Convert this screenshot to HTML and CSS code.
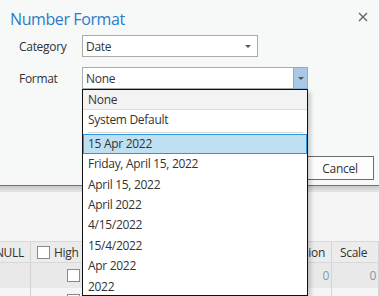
FILE: index.html
```html
<!DOCTYPE html>
<html lang="en">
<head>
  <meta charset="UTF-8" />
  <title>Number Format</title>
  <link rel="stylesheet" href="styles.css">
</head>
<body>
  <div class="dialog">
    <div class="dialog-header">
      <div class="dialog-title">Number Format</div>
      <svg class="close-icon" width="10" height="10" viewBox="0 0 10 10">
        <path d="M1 1 L9 9 M9 1 L1 9" stroke="#666" stroke-width="1.4" fill="none" />
      </svg>
    </div>

    <div class="form-row">
      <label class="form-label">Category</label>
      <div class="select select-category">
        <span class="select-value">Date</span>
        <span class="select-arrow"></span>
      </div>
    </div>

    <div class="form-row">
      <label class="form-label">Format</label>
      <div class="select select-format">
        <span class="select-value">None</span>
        <span class="select-button"><span class="select-arrow"></span></span>
      </div>
    </div>

    <div class="dialog-footer">
      <button class="btn">Cancel</button>
    </div>
  </div>
  <div class="dialog-shadow"></div>

  <div class="table-area">
    <div class="table">
      <div class="table-row table-head">
        <div class="cell cell-null"><span>Allow NULL</span></div>
        <div class="cell cell-highlight"><span class="checkbox"></span>High</div>
        <div class="cell cell-precision">Precision</div>
        <div class="cell cell-scale">Scale</div>
      </div>
      <div class="table-row row-alt">
        <div class="cell cell-null"></div>
        <div class="cell cell-check"><span class="checkbox"></span></div>
        <div class="cell cell-num">0</div>
        <div class="cell cell-num">0</div>
      </div>
      <div class="table-row">
        <div class="cell cell-null"></div>
        <div class="cell cell-check"><span class="checkbox"></span></div>
        <div class="cell cell-num">0</div>
        <div class="cell cell-num">0</div>
      </div>
    </div>
  </div>

  <ul class="dropdown-list">
    <li class="option option-none">None</li>
    <li class="option option-default">System Default</li>
    <li class="option option-selected">15 Apr 2022</li>
    <li class="option">Friday, April 15, 2022</li>
    <li class="option">April 15, 2022</li>
    <li class="option">April 2022</li>
    <li class="option">4/15/2022</li>
    <li class="option">15/4/2022</li>
    <li class="option">Apr 2022</li>
    <li class="option">2022</li>
  </ul>
</body>
</html>
```

FILE: styles.css
```css
* {
  box-sizing: border-box;
  margin: 0;
  padding: 0;
}

body {
  font-family: "Open Sans", "Noto Sans", sans-serif;
  font-size: 12px;
  letter-spacing: -0.3px;
  color: #333;
  background: #f5f5f5;
  width: 379px;
  height: 296px;
  overflow: hidden;
  position: relative;
}

/* Dialog */
.dialog {
  height: 186px;
  background: #f7f8f8;
  border-bottom: 1px solid #2f86cf;
  display: flex;
  flex-direction: column;
}

.dialog-header {
  display: flex;
  justify-content: space-between;
  align-items: center;
  padding: 7px 11px 0 10px;
  height: 30px;
}

.dialog-title {
  font-size: 16px;
  letter-spacing: -0.4px;
  color: #2a7cc7;
}

.close-icon {
  margin-top: -3px;
}

.form-row {
  display: flex;
  align-items: center;
  height: 22px;
  margin-top: 5px;
}

.form-row + .form-row {
  margin-top: 10px;
}

.form-label {
  width: 82px;
  padding-left: 19px;
}

.select {
  height: 22px;
  background: #fff;
  border: 1px solid #ababab;
  display: flex;
  align-items: center;
  justify-content: space-between;
}

.select-category {
  width: 176px;
  padding-right: 6px;
}

.select-format {
  width: 226px;
}

.select-value {
  padding-left: 3px;
}

.select-arrow {
  width: 0;
  height: 0;
  border-left: 3px solid transparent;
  border-right: 3px solid transparent;
  border-top: 3px solid #555;
}

.select-button {
  width: 15px;
  height: 22px;
  margin-right: -1px;
  background: #a9c9e6;
  border: 1px solid #7eb0da;
  display: flex;
  align-items: center;
  justify-content: center;
}

.dialog-footer {
  margin-top: auto;
  display: flex;
  justify-content: flex-end;
  padding: 0 5px 5px 0;
}

.btn {
  width: 68px;
  height: 24px;
  font-family: inherit;
  font-size: 12px;
  letter-spacing: -0.3px;
  color: #333;
  background: #fdfdfd;
  border: 1px solid #6b6b6b;
}

.dialog-shadow {
  height: 6px;
  background: linear-gradient(to bottom, #c9c9c9, #e6e6e6);
}

/* Table behind */
.table-area {
  padding-top: 49px;
  height: 104px;
  overflow: hidden;
}

.table-row {
  display: grid;
  grid-template-columns: 31px 85px 216px 47px;
  height: 25px;
}

.table-head {
  height: 22px;
  background: #ececec;
  border-top: 1px solid #d8d8d8;
  border-bottom: 1px solid #d8d8d8;
}

.row-alt {
  background: #e9e9e9;
}

.cell {
  display: flex;
  align-items: center;
  border-right: 1px solid #d4d4d4;
  white-space: nowrap;
  overflow: hidden;
}

.cell-null {
  justify-content: flex-end;
  padding-right: 6px;
}

.cell-highlight {
  padding-left: 6px;
  gap: 4px;
}

.cell-precision {
  justify-content: flex-end;
  padding-right: 6px;
}

.cell-scale {
  padding-left: 8px;
}

.cell-check {
  justify-content: center;
}

.cell-num {
  justify-content: flex-end;
  padding-right: 2px;
  color: #7f9ab5;
}

.checkbox {
  width: 13px;
  height: 13px;
  background: #fff;
  border: 1px solid #8a8a8a;
  flex-shrink: 0;
}

/* Open dropdown */
.dropdown-list {
  position: absolute;
  left: 82px;
  top: 89px;
  width: 226px;
  height: 207px;
  list-style: none;
  background: #fff;
  border: 1px solid #111;
  box-shadow: 3px 3px 4px rgba(0, 0, 0, 0.18);
}

.option {
  height: 20.4px;
  line-height: 20px;
  padding-left: 5px;
  white-space: nowrap;
}

.option-none {
  background: #f3f3f3;
  border-bottom: 1px solid #dcdcdc;
}

.option-default {
  position: relative;
  margin-bottom: 3px;
}

.option-default::after {
  content: '';
  position: absolute;
  left: 5px;
  right: 4px;
  bottom: -2px;
  border-bottom: 1px solid #d6d6d6;
}

.option-selected {
  background: #bee0f2;
  border: 1px solid #2f95dc;
  padding-left: 4px;
  line-height: 18px;
}
```
